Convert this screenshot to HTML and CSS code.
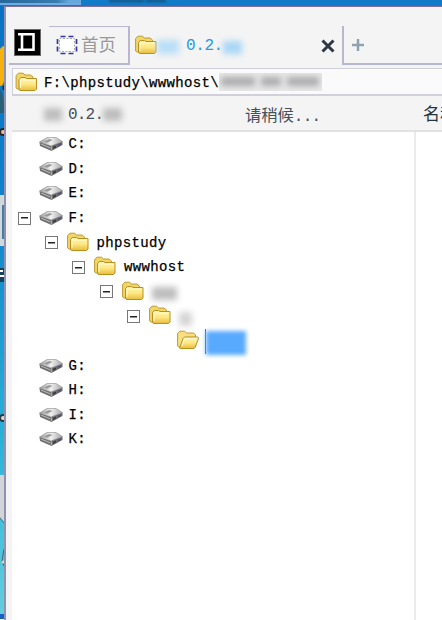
FILE: index.html
```
<!DOCTYPE html>
<html lang="zh-CN">
<head>
<meta charset="utf-8">
<title>F:\phpstudy\wwwhost</title>
<link rel="stylesheet" href="styles.css">
</head>
<body>
<svg class="defs" width="0" height="0" aria-hidden="true">
  <defs>
    <linearGradient id="gold" x1="0" y1="0" x2="0" y2="1"><stop offset="0" stop-color="#fff6ae"/><stop offset=".5" stop-color="#ffe885"/><stop offset="1" stop-color="#e6bd3c"/></linearGradient>
    <linearGradient id="metal" x1="0" y1="0" x2="1" y2="0"><stop offset="0" stop-color="#999"/><stop offset=".5" stop-color="#f0f0f0"/><stop offset="1" stop-color="#a6a6a6"/></linearGradient>
    <symbol id="folder" viewBox="0 0 22 20">
      <path d="M.6 16V3.500L3 1.200h4.500l2 1.800H15L17.500 5v12H2z" fill="#f1d569" stroke="#c09a30" stroke-width="1"/>
      <path d="M3.500 17V7.500L5.300 5.500H9.500L11 6.500H21V17L19.500 18.500H4.300z" fill="url(#gold)" stroke="#b98f20" stroke-width="1"/>
      <path d="M5 16V8h4.500l1.500.200h8.500" fill="none" stroke="#fffbd2"/>
    </symbol>
    <symbol id="folder-open" viewBox="0 0 22 20">
      <path d="M.6 16V3.500L3 1.200h4.500l2 1.800H16.500L18.500 5v12H2z" fill="#f8e080" stroke="#c09a30" stroke-width="1"/>
      <path d="M2.500 18L6 8.500L7.500 7H20.500Q21.700 7 21.300 9L18.500 16.500L17 18.500H3.500z" fill="url(#gold)" stroke="#b98f20" stroke-width="1"/>
      <path d="M5 16L7.700 8.500H20" fill="none" stroke="#fffbd2"/>
    </symbol>
    <symbol id="drive" viewBox="0 0 24 16">
      <path d="M.500 6L12 9.500L23.500 5.500V9L12.500 15L1 10z" fill="#707070"/>
      <path d="M.500 6L8 1.500H17L23.500 5.500L12 10z" fill="url(#metal)" stroke="#8b8b8b" stroke-width=".6"/>
      <path d="M5 5.500L10.500 3L13.500 4L8 6.700z" fill="#999"/>
      <path d="M12.300 10.500V14.300M2 8L11 11.800" stroke="#bbb" fill="none"/>
      <path d="M14 10.800L17 9.500V11.500L14 13z" fill="#3c3c40"/>
      <path d="M18.500 8.500L22.500 6.800V8.700L18.500 10.700z" fill="#55547a"/>
    </symbol>
  </defs>
</svg>
<div class="desktop">
  <div class="behind"><span class="pane"></span><span class="smudge s1"></span><span class="smudge s2"></span></div>
  <div class="below">
    <svg class="wallpaper" width="4" height="613" viewBox="0 7 4 613">
      <defs><linearGradient id="sky" x1="0" y1="0" x2="0" y2="1"><stop offset="0" stop-color="#0872c2"/><stop offset=".35" stop-color="#1184ca"/><stop offset=".7" stop-color="#28b2d8"/><stop offset="1" stop-color="#66cedd"/></linearGradient></defs>
      <rect y="7" width="4" height="613" fill="url(#sky)"/>
      <path d="M0 50Q4 45 4 48V82Q3 87 0 87z" fill="#f5b20e"/>
      <path d="M0 90Q4 96 4 114H0z" fill="#296078"/><rect x="2.500" y="87" width="1.500" height="4" fill="#222"/>
      <circle cx="3" cy="133" r="4" fill="#2a2528"/><circle cx="3" cy="133" r="2" fill="#e9c08e"/>
      <rect y="196" width="4" height="51" fill="#cfd8dd"/><rect x="2" y="206" width="2" height="34" fill="#477e9d"/>
      <path d="M0 269h4v14H0z" fill="#164257"/><path d="M0 272h3M0 277h4" stroke="#fff" stroke-width="2"/>
      <circle cx="3" cy="419" r="4" fill="#263c46"/><circle cx="3" cy="419" r="2" fill="#ead7b3"/>
      <path d="M0 476h4v47L0 518z" fill="#d2d4d5"/><path d="M0 519l4 5" stroke="#557078"/>
      <path d="M4 550L2 562l2 5" stroke="#396b70" fill="none"/><circle cx="3" cy="563" r="1.500" fill="#d9d4aa"/>
      <rect y="615" width="4" height="5" fill="#1760bd"/>
    </svg>
    <main class="window">
      <header class="tabs">
        <div class="lead">
          <svg width="27" height="27" viewBox="0 0 27 27"><rect x=".5" y=".5" width="26" height="26" fill="#000" stroke="#686868"/><path d="M4 5.200H19.500V20.800H4M8 5.200V20.800" stroke="#fff" stroke-width="2.600" fill="none"/></svg>
        </div>
        <div class="tab home">
          <svg width="22" height="20" viewBox="0 0 22 20"><path d="M4.500 1.500h5M12.500 1.500h5M4.500 18.500h5M12.500 18.500h5M1.500 4v5M1.500 11.500v5M20.500 4v5M20.500 11.500v5" stroke="#3434a6" stroke-width="1.700" fill="none"/><rect x="3.500" y="3.500" width="15" height="13" fill="#fff" stroke="#aaa" stroke-dasharray="2 1.500"/></svg>
          <span>首页</span>
        </div>
        <div class="tab active">
          <svg width="22" height="20"><use href="#folder"/></svg>
          <span class="mask sky m1"></span><span class="version">0.2.</span><span class="mask sky m2"></span>
          <svg class="close" width="14" height="14" viewBox="0 0 14 14"><path d="M1.500 1.500L12.500 12.500M12.500 1.500L1.500 12.500" stroke="#2c3945" stroke-width="3"/></svg>
        </div>
        <div class="newtab"><svg width="12" height="12" viewBox="0 0 12 12"><path d="M6 0V12M0 6H12" stroke="#8da2b0" stroke-width="2.500"/></svg></div>
      </header>
      <div class="address"><svg width="23" height="20"><use href="#folder"/></svg><span class="mono path">F:\phpstudy\wwwhost\</span><span class="pathmask"><i class="p1"></i><i class="p2"></i><i class="p3"></i></span></div>
      <div class="columns"><span class="mask gray c1"></span><span class="num">0.2.</span><span class="mask gray c2"></span><span class="wait">请稍候<span class="num">...</span></span><span class="name">名称</span></div>
      <div class="content">
        <div class="tree mono">
          <div class="row"><i class="box none"></i><svg class="drive"><use href="#drive"/></svg><span>C:</span></div>
          <div class="row"><i class="box none"></i><svg class="drive"><use href="#drive"/></svg><span>D:</span></div>
          <div class="row"><i class="box none"></i><svg class="drive"><use href="#drive"/></svg><span>E:</span></div>
          <div class="row"><i class="box"></i><svg class="drive"><use href="#drive"/></svg><span>F:</span></div>
          <div class="row l1"><i class="box"></i><svg class="folder"><use href="#folder"/></svg><span>phpstudy</span></div>
          <div class="row l2"><i class="box"></i><svg class="folder"><use href="#folder"/></svg><span>wwwhost</span></div>
          <div class="row l3"><i class="box"></i><svg class="folder"><use href="#folder"/></svg><span class="mask gray t1"></span></div>
          <div class="row l4"><i class="box"></i><svg class="folder"><use href="#folder"/></svg><span class="mask gray t2"></span></div>
          <div class="row l5"><i class="box none"></i><svg class="folder"><use href="#folder-open"/></svg><span class="caret"></span><span class="selected"></span></div>
          <div class="row"><i class="box none"></i><svg class="drive"><use href="#drive"/></svg><span>G:</span></div>
          <div class="row"><i class="box none"></i><svg class="drive"><use href="#drive"/></svg><span>H:</span></div>
          <div class="row"><i class="box none"></i><svg class="drive"><use href="#drive"/></svg><span>I:</span></div>
          <div class="row"><i class="box none"></i><svg class="drive"><use href="#drive"/></svg><span>K:</span></div>
        </div>
        <div class="files"></div>
      </div>
    </main>
  </div>
</div>
</body>
</html>
```
FILE: styles.css
```
* { box-sizing: border-box; }
body { margin: 0; overflow: hidden; font-family: "Liberation Sans", "Noto Sans CJK SC", sans-serif; }
svg { display: block; flex: none; }
.defs { position: absolute; }
.desktop { width: 442px; height: 620px; display: flex; flex-direction: column; overflow: hidden; }
.behind { height: 6px; flex: none; display: flex; background: #117bc7; }
.pane { width: 81px; height: 5px; background: linear-gradient(90deg, #27679b, #387baf 70%, #66a8dc 85%); border-bottom: 2px solid #68aee1; }
.smudge { height: 2px; background: #164d78; filter: blur(1px); }
.s1 { width: 35px; margin-left: 28px; }
.s2 { width: 20px; margin-left: 2px; }
.below { display: flex; flex: 1; min-height: 0; }
.window { flex: 1; min-width: 0; display: flex; flex-direction: column; background: #f4f4f4; border-left: 2px solid #9090b4; border-top: 1px solid #82709f; overflow: hidden; }
.tabs { height: 61px; flex: none; display: flex; align-items: stretch; padding: 19px 0 3px 3px; }
.lead { width: 40px; padding: 3px 0 0 5px; border-bottom: 2px solid #b9b7ce; }
.tab { display: flex; align-items: center; }
.home { width: 81px; padding-left: 7px; gap: 3px; border: solid #b9b7ce; border-width: 1px 2px 2px 0; color: #999; font-size: 17.5px; line-height: 24px; white-space: nowrap; }
.active { width: 212px; padding-left: 5px; padding-bottom: 2px; }
.version { color: #219be8; font: 16px/20px "Liberation Mono", monospace; letter-spacing: -.4px; margin: 3px 0 0 7px; width: 33px; }
.close { margin-left: auto; margin-right: 7px; margin-top: 2px; }
.newtab { flex: 1; border: solid #b9b7ce; border-width: 0 0 2px 2px; padding: 13px 0 0 8px; }
.mask { display: block; flex: none; filter: blur(3px); }
.sky { background: #b9def8; }
.m1 { width: 22px; height: 14px; margin-top: 5px; }
.m2 { width: 19px; height: 13px; margin: 5px 0 0 4px; background: #a8d6f7; }
.gray { background: #bdbdbd; }
.address { margin-left: 6px; height: 28px; flex: none; display: flex; align-items: center; background: #fafafa; border: solid #d0d0da; border-width: 1px 0 2px 1px; padding-left: 2px; }
.mono { font-family: "Liberation Mono", "Noto Sans CJK SC", monospace; font-size: 14px; letter-spacing: .35px; color: #000; -webkit-text-stroke: .25px #000; }
.path { margin: 2px 0 0 6px; width: 175px; line-height: 20px; white-space: pre; }
.pathmask { width: 103px; height: 18px; overflow: hidden; background: #e9e9e9; filter: blur(.6px); display: flex; align-items: center; gap: 6px; padding-left: 2px; }
.pathmask i { height: 9px; background: #aaa; filter: blur(3px); }
.p1 { width: 34px; }
.p2 { width: 20px; }
.p3 { width: 32px; }
.columns { height: 36px; flex: none; display: flex; align-items: center; padding-left: 32px; margin-left: 6px; border-bottom: 2px solid #e2e2e2; color: #46505b; font-size: 17px; line-height: 24px; white-space: nowrap; overflow: hidden; }
.columns > span { flex: none; }
.c1 { width: 18px; height: 13px; margin-top: 2px; }
.c2 { width: 19px; height: 13px; margin-top: 2px; }
.num { font-family: "Liberation Mono", monospace; font-size: 16px; letter-spacing: -.8px; }
.columns > .num { margin: 3px 0 0 6px; width: 35px; }
.wait { margin-left: 123px; width: 178px; margin-top: 5px; font-size: 16.3px; }
.name { margin-top: 3px; color: #26323c; }
.content { flex: 1; min-height: 0; margin-left: 6px; display: flex; background: #fff; }
.tree { width: 402px; }
.files { flex: 1; border-left: 2px solid #ebebeb; }
.row { height: 24.6px; display: flex; align-items: center; padding-left: 5.500px; }
.row > span { line-height: 20px; }
.l1 { padding-left: 32.500px; }
.l2 { padding-left: 60px; }
.l3 { padding-left: 87.500px; }
.l4 { padding-left: 115px; }
.l5 { padding-left: 142.500px; }
.box { width: 13px; height: 13px; flex: none; border: 1px solid #777; background: linear-gradient(#222, #222) center / 7px 1.500px no-repeat #fff; }
.none { visibility: hidden; }
.drive { width: 24px; height: 16px; margin: 0 6px 0 8px; }
.folder { width: 22px; height: 20px; margin: -2px 8px 0 9px; }
.t1 { width: 25px; height: 13px; margin-top: 4px; }
.t2 { width: 13px; height: 14px; margin-top: 6px; background: #d5d5d5; }
.caret { width: 1px; height: 25px; margin-left: -2px; background: #1875d2; }
.selected { width: 40px; height: 24px; margin-top: 3px; background: #58aaff; filter: blur(2px); }
```
